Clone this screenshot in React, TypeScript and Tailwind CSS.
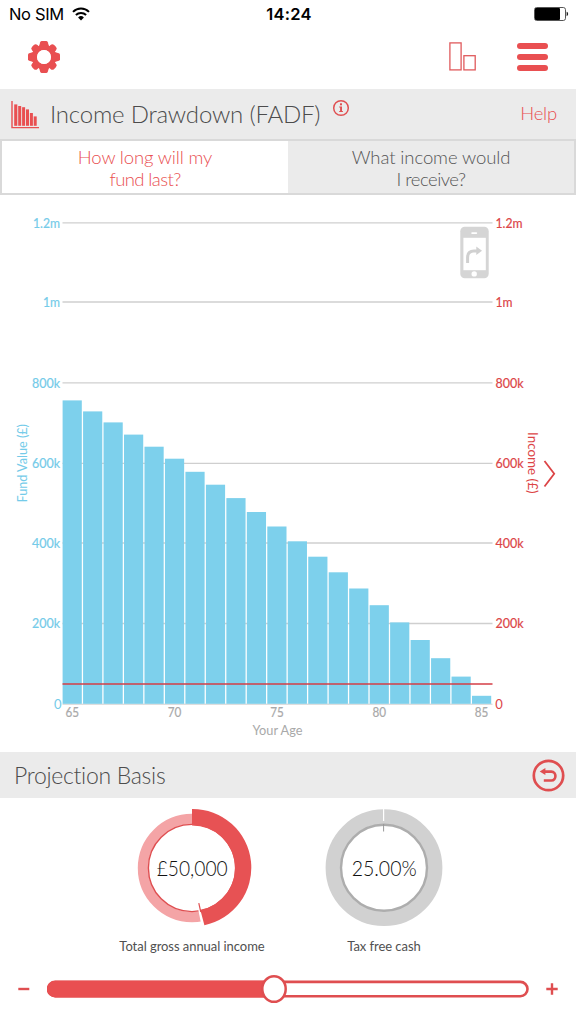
import React from "react";

const BAR_TOPS = [
  400.4, 411.4, 422.4, 434.6, 446.7, 458.7, 471.8, 484.7, 498.1, 512, 526.5, 541.3, 556.7, 572.3, 588.5, 605.2, 622.4,
  640, 658.2, 676.6, 695.8,
];

const GRID = [
  { y: 222.8, label: "1.2m", width: 27 },
  { y: 302, label: "1m", width: 17 },
  { y: 382.8, label: "800k", width: 28 },
  { y: 463.4, label: "600k", width: 28 },
  { y: 543, label: "400k", width: 28 },
  { y: 623.5, label: "200k", width: 28 },
];

const AGES = [
  { x: 72.3, label: "65" },
  { x: 174.6, label: "70" },
  { x: 277, label: "75" },
  { x: 379.3, label: "80" },
  { x: 481.5, label: "85" },
];

function StatusBar() {
  return (
    <div className="flex h-7 shrink-0 items-center justify-between pt-[1px] pr-[7px] pl-[9px] font-['Inter','Liberation_Sans',sans-serif] text-black">
      <div className="flex w-48 items-center gap-2">
        <span className="text-[16.5px] tracking-[-0.35px]">No SIM</span>
        <svg className="mb-[2px]" width="18" height="14" viewBox="0 0 18 14" fill="none" stroke="#000" strokeWidth="2">
          <path d="M1 4.9a11.3 11.3 0 0 1 16 0" />
          <path d="M3.9 8a7.2 7.2 0 0 1 10.2 0" />
          <path d="M9 13.4 6.1 10.5a4.1 4.1 0 0 1 5.8 0Z" fill="#000" stroke="none" />
        </svg>
      </div>
      <span className="text-[16.5px] font-semibold tracking-[0.3px]">14:24</span>
      <div className="flex w-48 justify-end">
        <svg className="mb-[2px]" width="35" height="14" viewBox="0 0 35 14">
          <rect x="0.5" y="0.5" width="31" height="13" rx="2.2" fill="#fff" stroke="#555" />
          <rect x="1" y="1" width="25" height="12" rx="1" fill="#000" />
          <path d="M32.6 4.8c2 .6 2 3.8 0 4.4Z" fill="#222" />
        </svg>
      </div>
    </div>
  );
}

function Gear() {
  return (
    <svg width="34" height="34" viewBox="-17 -17 34 34" fill="#e94f51">
      {[0, 90, 180, 270].map((a) => (
        <path key={a} transform={`rotate(${a})`} d="M-5.5-9-3.8-14.8Q-3.4-16-2.2-16H2.2Q3.4-16 3.8-14.8L5.5-9Z" />
      ))}
      {[45, 135, 225, 315].map((a) => (
        <rect key={a} transform={`rotate(${a})`} x="-3.8" y="-15.6" width="7.6" height="8" rx="2.6" />
      ))}
      <circle r="9.6" fill="none" stroke="#e94f51" strokeWidth="5.4" />
      <circle r="7" fill="#fff" />
    </svg>
  );
}

function NavBar() {
  return (
    <div className="flex h-[61px] shrink-0 items-center justify-between pr-7 pb-1 pl-[27px]">
      <Gear />
      <div className="flex items-center gap-[41px]">
        <svg width="27" height="29" viewBox="0 0 27 29" fill="none" stroke="#e05a5c" strokeWidth="1.3">
          <rect x="0.9" y="0.9" width="11.2" height="27" />
          <rect x="14.9" y="13.7" width="11.3" height="14.2" />
        </svg>
        <div className="flex w-[31px] flex-col gap-[5px]">
          <div className="h-[6px] rounded-full bg-[#e94f51]" />
          <div className="h-[6px] rounded-full bg-[#e94f51]" />
          <div className="h-[6px] rounded-full bg-[#e94f51]" />
        </div>
      </div>
    </div>
  );
}

function TitleBar() {
  return (
    <div className="flex h-[50px] shrink-0 items-center bg-[#ebebeb] pr-[19px] pl-[11px]">
      <svg width="29" height="29" viewBox="0 0 29 29" fill="#e94f51">
        <path d="M1 1V27.6H28" fill="none" stroke="#e94f51" strokeWidth="1.4" />
        <rect x="3.2" y="4.4" width="3.1" height="21.4" />
        <rect x="7.2" y="6" width="3" height="19.8" />
        <rect x="11.1" y="7.2" width="3" height="18.6" />
        <rect x="15" y="9.4" width="3" height="16.4" />
        <rect x="18.9" y="13" width="3" height="12.8" />
        <rect x="22.7" y="16.4" width="3" height="9.4" />
      </svg>
      <h1 className="ml-[10px] w-[273px] text-[24px] font-light tracking-[-0.2px] whitespace-nowrap text-[#4c4c4c]">
        Income Drawdown (FADF)
      </h1>
      <svg className="mb-[13px] ml-[9px]" width="18" height="18" viewBox="0 0 18 18" fill="#e05052">
        <circle cx="9" cy="9" r="7.3" fill="none" stroke="#e05052" strokeWidth="1.5" />
        <rect x="8" y="4.3" width="2" height="2" />
        <path d="M7.2 7.4H10v4.6h.9v1H7.2v-1h.9V8.4h-.9Z" />
      </svg>
      <span className="ml-auto text-[18.5px] font-light tracking-[-0.2px] text-[#e94f51]">Help</span>
    </div>
  );
}

function Tabs() {
  return (
    <div className="grid h-14 shrink-0 grid-cols-2 border-2 border-[#d9d9d9] text-center text-[18.5px] leading-[21.5px] font-light">
      <div className="bg-white pt-[6px] tracking-[-0.15px] text-[#e94f51]">
        How long will my
        <br />
        <span className="tracking-[-0.6px]">fund last?</span>
      </div>
      <div className="bg-[#ebebeb] pt-[6px] tracking-[-0.1px] text-[#555]">
        What income would
        <br />
        <span className="tracking-[-0.5px]">I receive?</span>
      </div>
    </div>
  );
}

function Chart() {
  return (
    <svg className="block shrink-0" width="576" height="557" viewBox="0 195 576 557" fontSize="13">
      {GRID.map((g) => (
        <g key={g.label}>
          <path d={`M62.5 ${g.y}H492.5`} stroke="#cfcfcf" strokeWidth="1.3" />
          <text
            x="60"
            y={g.y + 4.9}
            textAnchor="end"
            textLength={g.width}
            lengthAdjust="spacingAndGlyphs"
            fill="#74cbe9"
            stroke="#74cbe9"
            strokeWidth="0.2"
          >
            {g.label}
          </text>
          <text
            x="495.5"
            y={g.y + 4.9}
            textLength={g.width}
            lengthAdjust="spacingAndGlyphs"
            fill="#dc4547"
            stroke="#dc4547"
            strokeWidth="0.2"
          >
            {g.label}
          </text>
        </g>
      ))}
      <text x="61.5" y="708.8" textAnchor="end" fill="#74cbe9">
        0
      </text>
      <text x="495.3" y="708.8" fill="#dc4547">
        0
      </text>
      <path d="M62.5 704.2H492.5" stroke="#cfcfcf" />
      {BAR_TOPS.map((top, i) => (
        <rect key={top} x={62.6 + i * 20.47} y={top} width="19.2" height={703.8 - top} fill="#7dd0ec" />
      ))}
      <path d="M62.5 684H492.5" stroke="#d43d46" strokeOpacity="0.75" strokeWidth="2" />
      {AGES.map((a) => (
        <text
          key={a.label}
          x={a.x}
          y="717.2"
          textAnchor="middle"
          textLength="13.6"
          lengthAdjust="spacingAndGlyphs"
          fill="#a9a9a9"
          stroke="#a9a9a9"
          strokeWidth="0.2"
        >
          {a.label}
        </text>
      ))}
      <text x="277.5" y="735" textAnchor="middle" textLength="50" lengthAdjust="spacingAndGlyphs" fill="#a9a9a9">
        Your Age
      </text>
      <text
        transform="translate(27 502.5) rotate(-90)"
        textLength="78.5"
        lengthAdjust="spacingAndGlyphs"
        fill="#74cbe9"
      >
        Fund Value (£)
      </text>
      <text transform="translate(527.8 432) rotate(90)" textLength="61.5" lengthAdjust="spacingAndGlyphs" fill="#dc4547">
        Income (£)
      </text>
      <path d="M544.5 461 554.2 473.7 544.5 486.5" fill="none" stroke="#dc4547" strokeWidth="1.8" />
      <g>
        <rect x="460.3" y="226.8" width="28.4" height="51.4" rx="4.5" fill="#d5d5d5" />
        <rect x="463.4" y="237.8" width="22.4" height="32.4" fill="#fff" />
        <rect x="471.2" y="232.2" width="6" height="1.8" rx="0.9" fill="#fff" />
        <circle cx="474.2" cy="273.9" r="2.7" fill="#fff" />
        <path d="M467.6 263V257.5Q467.6 251 473.8 251H477" fill="none" stroke="#d0d0d0" strokeWidth="3" />
        <path d="M476.3 246.6 482 250.7 476.3 254.9Z" fill="#d0d0d0" />
      </g>
    </svg>
  );
}

function ProjectionBar() {
  return (
    <div className="flex h-[46px] shrink-0 items-center justify-between bg-[#ebebeb] pr-[11px] pl-[14px]">
      <h2 className="text-[23px] font-light tracking-[-0.3px] text-[#4c4c4c]">Projection Basis</h2>
      <svg width="33" height="33" viewBox="0 0 33 33" fill="none" stroke="#df4e50">
        <circle cx="16.5" cy="16.5" r="14.7" strokeWidth="2.7" />
        <path d="M11.5 12.6H19.3C24.8 12.6 24.8 21.5 19.3 21.5H11.8" strokeWidth="2.6" />
        <path d="M7.7 12.4 13.4 8.9V15.9Z" fill="#df4e50" stroke="none" />
      </svg>
    </div>
  );
}

function IncomeDial() {
  return (
    <svg width="130" height="124" viewBox="127 805 130 124">
      <circle cx="192" cy="868" r="49" fill="none" stroke="#f4a4a6" strokeWidth="10.4" />
      <circle cx="192" cy="868" r="43.6" fill="none" stroke="#df4e50" strokeWidth="1.4" />
      <path d="M200.2 909 203.6 926" stroke="#fff" strokeWidth="4" />
      <path d="M192 809A58.7 58.7 0 0 1 204.4 925.2L200.3 909.8A42.5 42.5 0 0 0 192 825.5Z" fill="#e75254" />
      <path d="M198.8 903.2 200.8 912" stroke="#df4e50" strokeWidth="1.2" />
      <text
        x="192.2"
        y="875.5"
        textAnchor="middle"
        textLength="71"
        lengthAdjust="spacingAndGlyphs"
        fontSize="21.5"
        fontWeight="300"
        fill="#111"
      >
        £50,000
      </text>
    </svg>
  );
}

function CashDial() {
  return (
    <svg width="130" height="124" viewBox="319 805 130 124">
      <circle cx="384" cy="867.7" r="51" fill="none" stroke="#d1d1d1" strokeWidth="14.8" />
      <circle cx="384" cy="867.7" r="43" fill="none" stroke="#adadad" strokeWidth="2.4" />
      <path d="M383.6 808V821" stroke="#fff" strokeWidth="1.2" />
      <path d="M383.6 824V831.5" stroke="#999" strokeWidth="1" />
      <text
        x="384.2"
        y="875.5"
        textAnchor="middle"
        textLength="65"
        lengthAdjust="spacingAndGlyphs"
        fontSize="21.5"
        fontWeight="300"
        fill="#111"
      >
        25.00%
      </text>
    </svg>
  );
}

function Dials() {
  return (
    <div className="flex h-[167px] shrink-0 justify-center pt-[7px] text-[13px] text-[#505050]">
      <div className="flex w-48 flex-col items-center gap-[9px]">
        <IncomeDial />
        <span className="leading-4 tracking-[-0.05px] whitespace-nowrap">Total gross annual income</span>
      </div>
      <div className="flex w-48 flex-col items-center gap-[9px]">
        <CashDial />
        <span className="leading-4 tracking-[-0.05px] whitespace-nowrap">Tax free cash</span>
      </div>
    </div>
  );
}

function Slider() {
  return (
    <div className="flex h-12 shrink-0 items-center justify-between px-[18px]">
      <svg width="12" height="12" viewBox="0 0 12 12" stroke="#df4e50" strokeWidth="2.4">
        <path d="M0.3 6H11.3" />
      </svg>
      <svg width="482" height="30" viewBox="47 974 482 30">
        <rect x="48" y="981.9" width="479.5" height="14.4" rx="7.2" fill="#fff" stroke="#df4e50" strokeWidth="2.6" />
        <path d="M274 980.8V997.4H55.3A8.3 8.3 0 0 1 55.3 980.8Z" fill="#e94f51" />
        <ellipse cx="274" cy="989" rx="11.7" ry="12.8" fill="#fff" stroke="#df4e50" strokeWidth="2.5" />
      </svg>
      <svg width="12" height="12" viewBox="0 0 12 12" stroke="#df4e50" strokeWidth="2.4">
        <path d="M0.3 6H11.7M6 0.3V11.7" />
      </svg>
    </div>
  );
}

export default function App() {
  return (
    <main className="flex h-[1024px] w-[576px] flex-col overflow-hidden bg-white font-['Lato','Liberation_Sans',sans-serif]">
      <StatusBar />
      <NavBar />
      <TitleBar />
      <Tabs />
      <Chart />
      <ProjectionBar />
      <Dials />
      <Slider />
    </main>
  );
}
